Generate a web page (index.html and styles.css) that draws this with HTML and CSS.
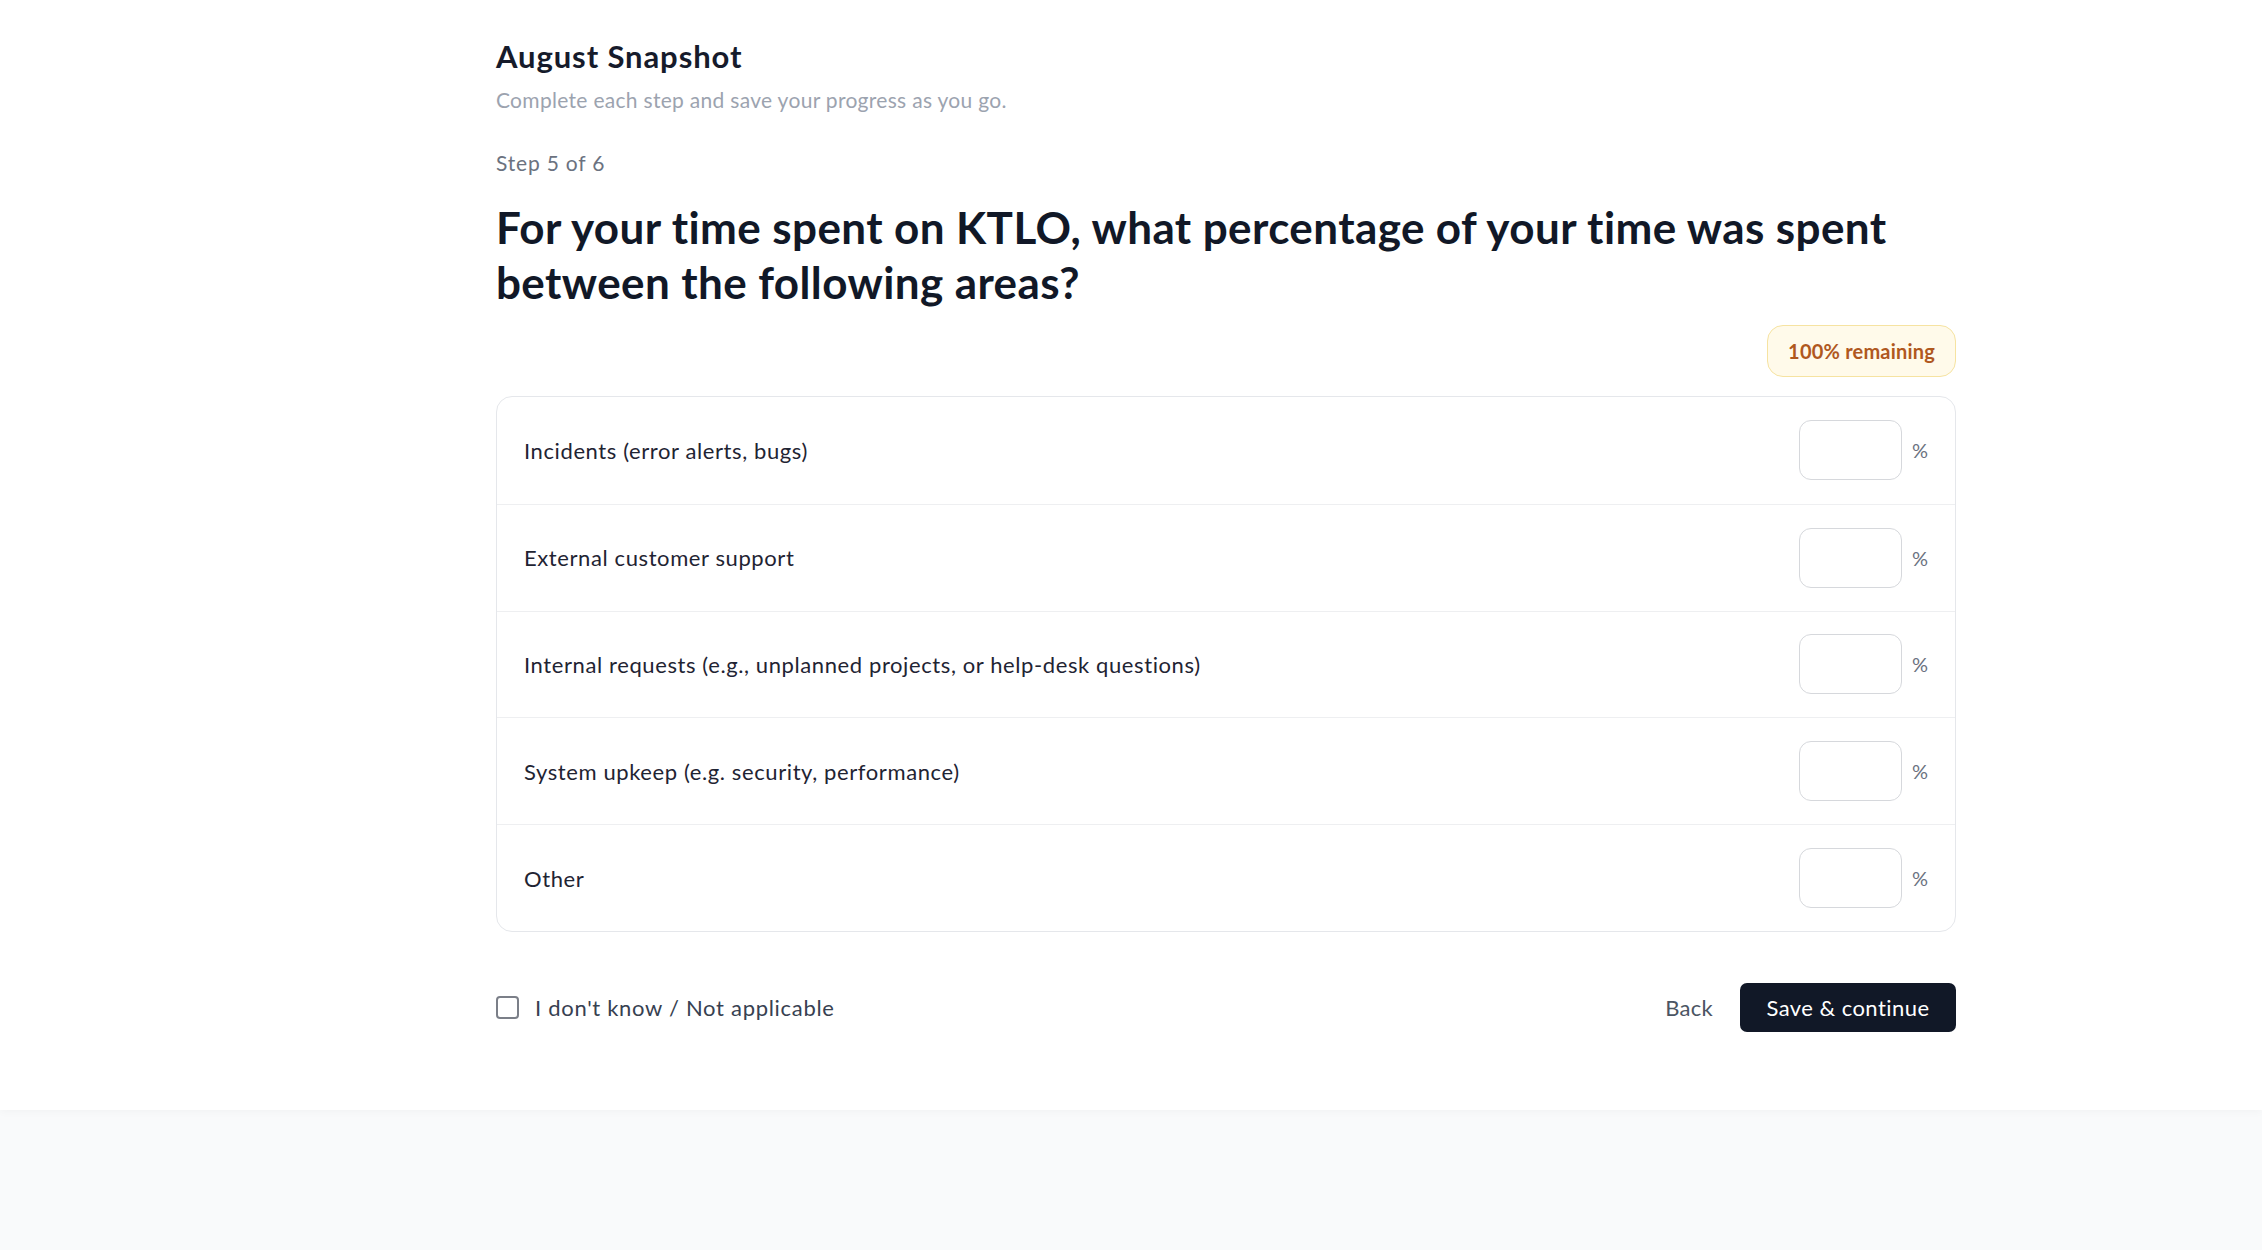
FILE: index.html
```html
<!DOCTYPE html>
<html lang="en">
<head>
<meta charset="utf-8">
<title>August Snapshot</title>
<link rel="stylesheet" href="styles.css">
</head>
<body>
<main class="page">
  <div class="container">
    <header class="survey-head">
      <h1 class="survey-title">August Snapshot</h1>
      <p class="survey-sub">Complete each step and save your progress as you go.</p>
    </header>
    <p class="step">Step 5 of 6</p>
    <h2 class="question">For your time spent on KTLO, what percentage of your time was spent between the following areas?</h2>
    <div class="badge-row"><span class="badge">100% remaining</span></div>
    <div class="card">
      <div class="row"><span class="label">Incidents (error alerts, bugs)</span><span class="field"><input class="pct" type="text"><span class="unit">%</span></span></div>
      <div class="row"><span class="label">External customer support</span><span class="field"><input class="pct" type="text"><span class="unit">%</span></span></div>
      <div class="row"><span class="label">Internal requests (e.g., unplanned projects, or help-desk questions)</span><span class="field"><input class="pct" type="text"><span class="unit">%</span></span></div>
      <div class="row"><span class="label">System upkeep (e.g. security, performance)</span><span class="field"><input class="pct" type="text"><span class="unit">%</span></span></div>
      <div class="row"><span class="label">Other</span><span class="field"><input class="pct" type="text"><span class="unit">%</span></span></div>
    </div>
    <div class="actions">
      <label class="na"><span class="box"></span><span class="na-text">I don't know / Not applicable</span></label>
      <div class="buttons">
        <button class="back" type="button">Back</button>
        <button class="save" type="button">Save &amp; continue</button>
      </div>
    </div>
  </div>
</main>
<footer class="foot"></footer>
</body>
</html>
```
FILE: styles.css
```css
* { box-sizing: border-box; }
html, body { margin: 0; padding: 0; }
body {
  font-family: "Lato", "Liberation Sans", sans-serif;
  background: #f9fafb;
  color: #111827;
}
.page {
  background: #ffffff;
  height: 1110px;
  box-shadow: 0 2px 8px rgba(17, 24, 39, 0.03);
  position: relative;
  z-index: 1;
}
.container {
  width: 1460px;
  margin-left: 496px;
  padding-top: 38px;
}
.survey-title {
  margin: 0;
  font-size: 31px;
  line-height: 36px;
  font-weight: 700;
  letter-spacing: 0.9px;
  color: #161b2b;
}
.survey-sub {
  margin: 12px 0 0;
  font-size: 21px;
  line-height: 28px;
  letter-spacing: 0.3px;
  color: #9ca3af;
}
.step {
  margin: 35px 0 0;
  font-size: 21px;
  line-height: 28px;
  letter-spacing: 0.8px;
  color: #6b7280;
}
.question {
  margin: 23px 0 0;
  font-size: 44px;
  line-height: 55px;
  font-weight: 700;
  letter-spacing: 0.4px;
  color: #111827;
}
.badge-row {
  display: flex;
  justify-content: flex-end;
  margin-top: 15px;
}
.badge {
  display: inline-flex;
  align-items: center;
  height: 52px;
  padding: 0 20px;
  border: 1px solid #f6e3a1;
  background: #fffaea;
  border-radius: 16px;
  color: #b0581e;
  font-size: 20px;
  font-weight: 700;
  letter-spacing: 0.2px;
}
.card {
  margin-top: 19px;
  border: 1px solid #e5e7eb;
  border-radius: 16px;
  overflow: hidden;
}
.row {
  display: flex;
  align-items: center;
  justify-content: space-between;
  height: 106.8px;
  padding: 0 27px;
}
.row + .row { border-top: 1px solid #eeeff1; }
.label {
  font-size: 22px;
  letter-spacing: 0.6px;
  color: #1f2433;
}
.field {
  display: flex;
  align-items: center;
  gap: 10px;
}
.pct {
  width: 103px;
  height: 60px;
  border: 1px solid #d6d8dc;
  border-radius: 12px;
  background: #fff;
  font: inherit;
  outline: none;
}
.unit {
  font-size: 20px;
  color: #6b7280;
}
.actions {
  display: flex;
  align-items: center;
  justify-content: space-between;
  margin-top: 51px;
}
.na {
  display: flex;
  align-items: center;
  gap: 16px;
}
.box {
  width: 23px;
  height: 23px;
  border: 2px solid #7b7f88;
  border-radius: 4px;
  background: #fff;
}
.na-text {
  font-size: 22px;
  letter-spacing: 0.7px;
  color: #374151;
}
.buttons {
  display: flex;
  align-items: center;
  gap: 27px;
}
.back {
  border: 0;
  background: none;
  padding: 0;
  font: inherit;
  font-size: 22px;
  letter-spacing: 0.3px;
  color: #4b5563;
}
.save {
  width: 216px;
  height: 49px;
  border: 0;
  border-radius: 7px;
  background: #111827;
  color: #ffffff;
  font: inherit;
  font-size: 22px;
  letter-spacing: 0.45px;
}
.foot {
  height: 140px;
  background: #f9fafb;
}
```
